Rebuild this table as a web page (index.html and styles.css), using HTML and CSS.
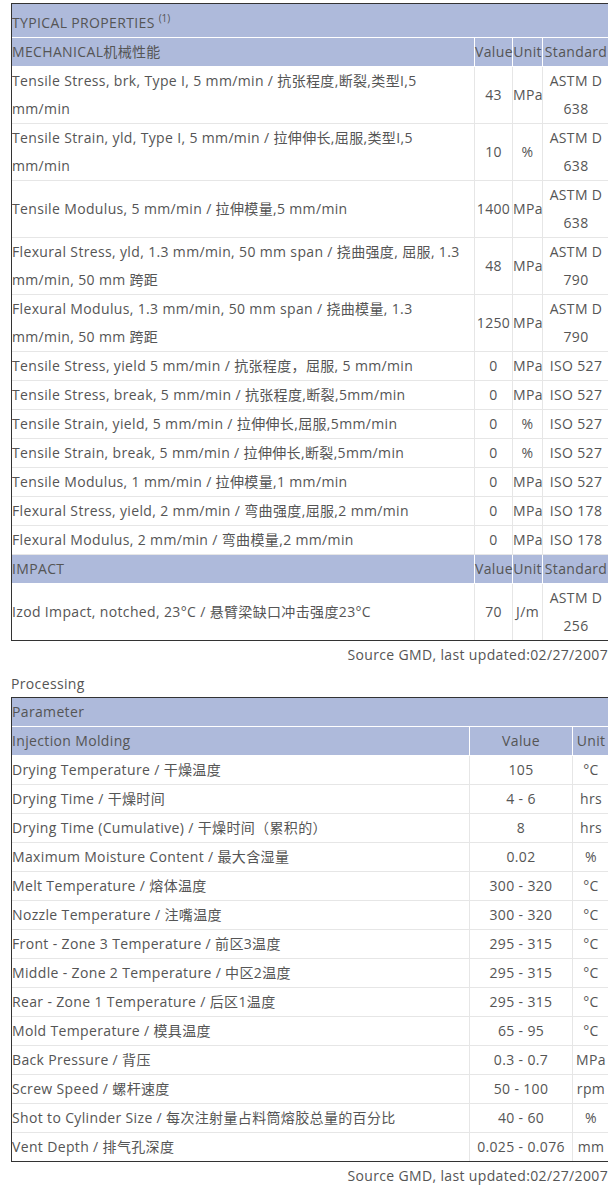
FILE: index.html
```html
<!DOCTYPE html>
<html lang="zh">
<head>
<meta charset="utf-8">
<title>Typical Properties</title>
<link rel="stylesheet" href="styles.css">
</head>
<body>
<div class="page">
  <table class="props">
    <colgroup>
      <col class="c-name">
      <col class="c-val">
      <col class="c-unit">
      <col class="c-std">
    </colgroup>
    <tr class="head title-row"><td colspan="4">TYPICAL PROPERTIES <sup>(1)</sup></td></tr>
    <tr class="head"><td>MECHANICAL机械性能</td><td class="ctr">Value</td><td class="ctr">Unit</td><td class="ctr">Standard</td></tr>
    <tr><td>Tensile Stress, brk, Type I, 5 mm/min / 抗张程度,断裂,类型I,5<br>mm/min</td><td class="ctr">43</td><td class="ctr">MPa</td><td class="ctr">ASTM D 638</td></tr>
    <tr><td>Tensile Strain, yld, Type I, 5 mm/min / 拉伸伸长,屈服,类型I,5<br>mm/min</td><td class="ctr">10</td><td class="ctr">%</td><td class="ctr">ASTM D 638</td></tr>
    <tr><td>Tensile Modulus, 5 mm/min / 拉伸模量,5 mm/min</td><td class="ctr">1400</td><td class="ctr">MPa</td><td class="ctr">ASTM D 638</td></tr>
    <tr><td>Flexural Stress, yld, 1.3 mm/min, 50 mm span / 挠曲强度, 屈服, 1.3<br>mm/min, 50 mm 跨距</td><td class="ctr">48</td><td class="ctr">MPa</td><td class="ctr">ASTM D 790</td></tr>
    <tr><td>Flexural Modulus, 1.3 mm/min, 50 mm span / 挠曲模量, 1.3<br>mm/min, 50 mm 跨距</td><td class="ctr">1250</td><td class="ctr">MPa</td><td class="ctr">ASTM D 790</td></tr>
    <tr><td>Tensile Stress, yield 5 mm/min / 抗张程度，屈服, 5 mm/min</td><td class="ctr">0</td><td class="ctr">MPa</td><td class="ctr">ISO 527</td></tr>
    <tr><td>Tensile Stress, break, 5 mm/min / 抗张程度,断裂,5mm/min</td><td class="ctr">0</td><td class="ctr">MPa</td><td class="ctr">ISO 527</td></tr>
    <tr><td>Tensile Strain, yield, 5 mm/min / 拉伸伸长,屈服,5mm/min</td><td class="ctr">0</td><td class="ctr">%</td><td class="ctr">ISO 527</td></tr>
    <tr><td>Tensile Strain, break, 5 mm/min / 拉伸伸长,断裂,5mm/min</td><td class="ctr">0</td><td class="ctr">%</td><td class="ctr">ISO 527</td></tr>
    <tr><td>Tensile Modulus, 1 mm/min / 拉伸模量,1 mm/min</td><td class="ctr">0</td><td class="ctr">MPa</td><td class="ctr">ISO 527</td></tr>
    <tr><td>Flexural Stress, yield, 2 mm/min / 弯曲强度,屈服,2 mm/min</td><td class="ctr">0</td><td class="ctr">MPa</td><td class="ctr">ISO 178</td></tr>
    <tr><td>Flexural Modulus, 2 mm/min / 弯曲模量,2 mm/min</td><td class="ctr">0</td><td class="ctr">MPa</td><td class="ctr">ISO 178</td></tr>
    <tr class="head"><td>IMPACT</td><td class="ctr">Value</td><td class="ctr">Unit</td><td class="ctr">Standard</td></tr>
    <tr class="last"><td>Izod Impact, notched, 23°C / 悬臂梁缺口冲击强度23°C</td><td class="ctr">70</td><td class="ctr">J/m</td><td class="ctr">ASTM D 256</td></tr>
  </table>
  <p class="source">Source GMD, last updated:02/27/2007</p>

  <p class="section">Processing</p>
  <table class="proc">
    <colgroup>
      <col class="p-name">
      <col class="p-val">
      <col class="p-unit">
    </colgroup>
    <tr class="head"><td colspan="3">Parameter</td></tr>
    <tr class="head"><td>Injection Molding</td><td class="ctr">Value</td><td class="ctr">Unit</td></tr>
    <tr><td>Drying Temperature / 干燥温度</td><td class="ctr">105</td><td class="ctr">°C</td></tr>
    <tr><td>Drying Time / 干燥时间</td><td class="ctr">4 - 6</td><td class="ctr">hrs</td></tr>
    <tr><td>Drying Time (Cumulative) / 干燥时间（累积的）</td><td class="ctr">8</td><td class="ctr">hrs</td></tr>
    <tr><td>Maximum Moisture Content / 最大含湿量</td><td class="ctr">0.02</td><td class="ctr">%</td></tr>
    <tr><td>Melt Temperature / 熔体温度</td><td class="ctr">300 - 320</td><td class="ctr">°C</td></tr>
    <tr><td>Nozzle Temperature / 注嘴温度</td><td class="ctr">300 - 320</td><td class="ctr">°C</td></tr>
    <tr><td>Front - Zone 3 Temperature / 前区3温度</td><td class="ctr">295 - 315</td><td class="ctr">°C</td></tr>
    <tr><td>Middle - Zone 2 Temperature / 中区2温度</td><td class="ctr">295 - 315</td><td class="ctr">°C</td></tr>
    <tr><td>Rear - Zone 1 Temperature / 后区1温度</td><td class="ctr">295 - 315</td><td class="ctr">°C</td></tr>
    <tr><td>Mold Temperature / 模具温度</td><td class="ctr">65 - 95</td><td class="ctr">°C</td></tr>
    <tr><td>Back Pressure / 背压</td><td class="ctr">0.3 - 0.7</td><td class="ctr">MPa</td></tr>
    <tr><td>Screw Speed / 螺杆速度</td><td class="ctr">50 - 100</td><td class="ctr">rpm</td></tr>
    <tr><td>Shot to Cylinder Size / 每次注射量占料筒熔胶总量的百分比</td><td class="ctr">40 - 60</td><td class="ctr">%</td></tr>
    <tr class="last"><td>Vent Depth / 排气孔深度</td><td class="ctr">0.025 - 0.076</td><td class="ctr">mm</td></tr>
  </table>
  <p class="source">Source GMD, last updated:02/27/2007</p>
</div>
</body>
</html>
```
FILE: styles.css
```css
html {
  overflow-x: hidden;
}

body {
  margin: 0;
  background: #fff;
  font-family: "Open Sans", "Noto Sans CJK SC", sans-serif;
  font-size: 14px;
  letter-spacing: 0.35px;
  color: #555;
}

.page {
  width: 597px;
  padding: 3px 0 0 11px;
}

table {
  border-collapse: separate;
  border-spacing: 0;
  border: 1px solid #333;
  table-layout: fixed;
  width: 599px;
}

td {
  padding: 0;
  line-height: 28px;
  vertical-align: middle;
  text-align: left;
  border-right: 1px solid #e6e6e6;
  border-bottom: 1px solid #e6e6e6;
}

td:last-child {
  border-right: none;
}

tr.last td {
  border-bottom: none;
}

.ctr {
  text-align: center;
}

.head td {
  background: #aebadb;
  border-color: #fff;
  white-space: nowrap;
}

.title-row td {
  padding-top: 5px;
}

sup {
  font-size: 10px;
  line-height: 0;
  letter-spacing: 0;
}

.c-name { width: 463px; }
.c-val { width: 38px; }
.c-unit { width: 30px; }
.c-std { width: 66px; }

.p-name { width: 458px; }
.p-val { width: 103px; }
.p-unit { width: 36px; }

.source {
  margin: 4px 0 0;
  line-height: 20px;
  text-align: right;
}

.section {
  margin: 9px 0 3px;
  line-height: 20px;
}
```
